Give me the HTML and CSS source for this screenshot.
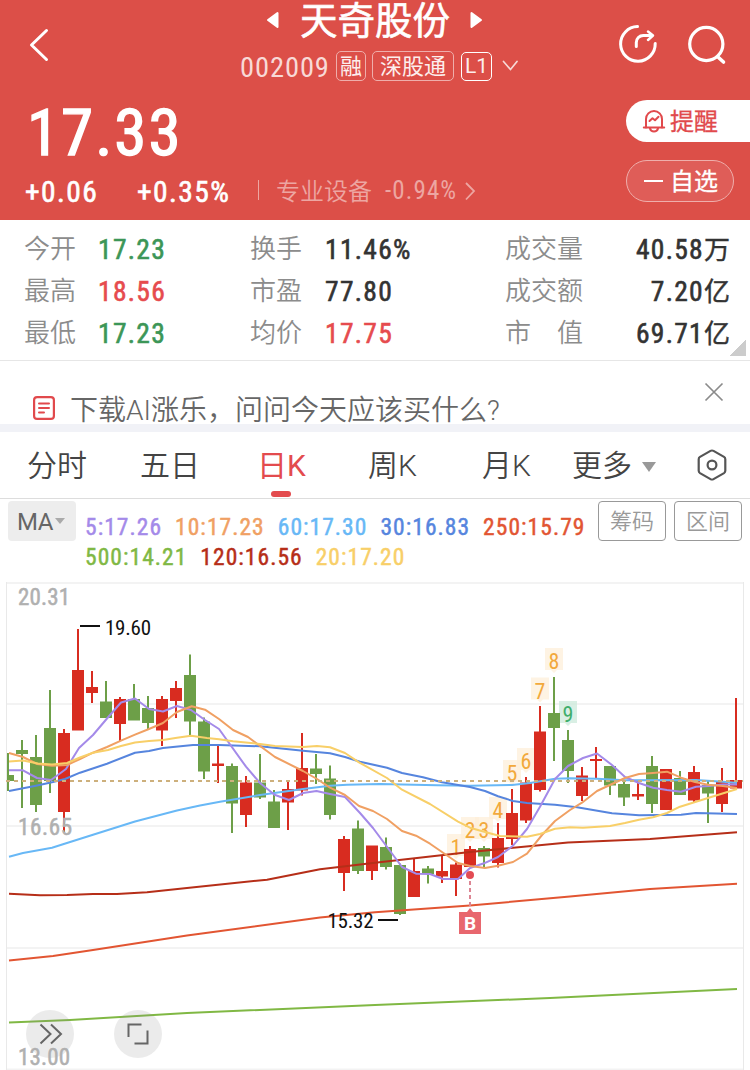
FILE: index.html
```html
<!DOCTYPE html>
<html lang="zh-CN">
<head>
<meta charset="utf-8">
<title>天奇股份 002009</title>
<link rel="stylesheet" href="styles.css">
</head>
<body>
<header class="header">
  <div class="topbar">
    <svg class="back" width="24" height="38" viewBox="0 0 24 38"><path d="M19.5 4.5 4.5 19l15 14.500" fill="none" stroke="#fff" stroke-width="3" stroke-linecap="round" stroke-linejoin="round"/></svg>
    <div class="heading">
      <div class="title-row">
        <svg width="14" height="20" viewBox="0 0 14 20"><path d="M11.500 3v14L2 10z" fill="#fff" stroke="#fff" stroke-width="2" stroke-linejoin="round"/></svg>
        <h1 class="title">天奇股份</h1>
        <svg width="14" height="20" viewBox="0 0 14 20"><path d="M2.500 3v14L12 10z" fill="#fff" stroke="#fff" stroke-width="2" stroke-linejoin="round"/></svg>
      </div>
      <div class="code-row">
        <span class="code">002009</span>
        <span class="tag tag-rong">融</span>
        <span class="tag tag-sz">深股通</span>
        <span class="tag tag-l1">L1</span>
        <svg class="code-arrow" width="18" height="14" viewBox="0 0 18 14"><path d="m2.500 2.500 7 8 6.500-8" fill="none" stroke="#f7d8d6" stroke-width="1.700" stroke-linecap="round"/></svg>
      </div>
    </div>
    <div class="actions">
      <svg width="42" height="42" viewBox="0 0 42 42" fill="none" stroke="#fff" stroke-width="3" stroke-linecap="round" stroke-linejoin="round"><path d="M20.500 3.600A17.300 17.300 0 1 0 38.200 20.500"/><path d="M19.300 23.500v-4a7 7 0 0 1 7-7h8"/><path d="M31 8.500l5 4-5 4.500" stroke-width="2.500"/></svg>
      <svg width="42" height="42" viewBox="0 0 42 42" fill="none" stroke="#fff" stroke-width="3.200" stroke-linecap="round"><circle cx="20.300" cy="21" r="16.600"/><path d="m32.500 34.500 5 4.500" stroke-width="3.600"/></svg>
    </div>
  </div>
  <div class="quote">
    <div class="quote-main">
      <div class="price">17.33</div>
      <div class="change-row">
        <span class="change">+0.06</span>
        <span class="change pct">+0.35%</span>
        <span class="divider"></span>
        <span class="sector">专业设备</span>
        <span class="sector-pct">-0.94%</span>
        <svg class="sector-arrow" width="14" height="22" viewBox="0 0 14 22"><path d="m3 3 8 8-8 8.500" fill="none" stroke="#eda6a2" stroke-width="1.800"/></svg>
      </div>
    </div>
    <div class="pills">
      <div class="pill pill-remind">
        <svg width="24" height="26" viewBox="0 0 24 26" fill="none" stroke="#e1494c" stroke-width="2" stroke-linecap="round" stroke-linejoin="round"><path d="M4 19.500V11a8 8 0 0 1 16 0v8.500"/><path d="M1.800 19.500h20.400M8 20.500c1 4 7 4 8 0M7.500 13l3-2.800 2.500 2 3.500-3.500"/></svg>
        <span>提醒</span>
      </div>
      <div class="pill pill-fav"><i class="minus"></i><span>自选</span></div>
    </div>
  </div>
</header>

<section class="stats">
  <span class="k">今开</span><span class="v green">17.23</span><span class="k">换手</span><span class="v">11.46%</span><span class="k">成交量</span><span class="v end">40.58<b>万</b></span>
  <span class="k">最高</span><span class="v red">18.56</span><span class="k">市盈</span><span class="v">77.80</span><span class="k">成交额</span><span class="v end">7.20<b>亿</b></span>
  <span class="k">最低</span><span class="v green">17.23</span><span class="k">均价</span><span class="v red">17.75</span><span class="k spread"><i>市</i><i>值</i></span><span class="v end">69.71<b>亿</b></span>
  <div class="corner"></div>
</section>

<section class="promo">
  <svg class="promo-icon" width="24" height="26" viewBox="0 0 24 26" fill="none" stroke="#e1494c" stroke-width="2.200" stroke-linecap="round"><rect x="2.100" y="2.100" width="19.800" height="21.800" rx="3"/><path d="M7 8.500h10M7 13h10M7 17.500h5" stroke-width="2"/></svg>
  <span class="promo-text">下载AI涨乐，问问今天应该买什么?</span>
  <svg class="close" width="22" height="22" viewBox="0 0 22 22"><path d="m2.500 2.500 17 17m0-17-17 17" stroke="#8b8b8b" stroke-width="1.700"/></svg>
</section>

<nav class="tabs">
  <span class="tab">分时</span>
  <span class="tab">五日</span>
  <span class="tab active">日K</span>
  <span class="tab">周K</span>
  <span class="tab">月K</span>
  <span class="tab">更多<i class="caret"></i></span>
  <svg width="32" height="34" viewBox="0 0 32 34" fill="none" stroke="#555" stroke-width="2.200" stroke-linejoin="round"><path d="M14.500 2.900q1.500-.8 3 0l10.500 6q1.300.8 1.300 2.300v11.600q0 1.500-1.300 2.300l-10.500 6q-1.500.8-3 0L4 25.100q-1.300-.8-1.300-2.300V11.200q0-1.500 1.300-2.300z"/><circle cx="16" cy="17" r="4.400"/></svg>
</nav>

<section class="legend">
  <div class="ma-btn">MA<i class="caret small"></i></div>
  <div class="ma-values">
    <div class="ma-line"><span class="c5">5:17.26</span><span class="c10">10:17.23</span><span class="c60">60:17.30</span><span class="c30">30:16.83</span><span class="c250">250:15.79</span></div>
    <div class="ma-line"><span class="c500">500:14.21</span><span class="c120">120:16.56</span><span class="c20">20:17.20</span></div>
  </div>
  <div class="box-btn">筹码</div>
  <div class="box-btn">区间</div>
</section>

<svg class="chart" id="chart" width="750" height="490" viewBox="0 580 750 490"></svg>
<script src="chart.js"></script>
</body>
</html>
```
FILE: styles.css
```css
* { box-sizing: border-box; }
body {
  margin: 0;
  width: 750px;
  height: 1070px;
  overflow: hidden;
  background: #fff;
  font-family: Roboto, "Noto Sans CJK SC", sans-serif;
  color: #333;
}
i { font-style: normal; }
svg { display: block; flex: none; }

.header { height: 220px; background: #dc4f48; color: #fff; }
.topbar { height: 90px; display: grid; grid-template-columns: 240px 1fr 133px; }
.back { margin: 26px 0 0 27px; }
.title-row { height: 40px; padding-left: 26px; display: flex; align-items: center; }
.title { margin: 1px 19px 0 20px; font-size: 37.5px; line-height: 40px; font-weight: 400; -webkit-text-stroke: 0.6px #fff; white-space: nowrap; }
.code-row { height: 52px; display: flex; align-items: center; }
.code { width: 96px; font-size: 28.5px; line-height: 30px; letter-spacing: 0.9px; font-stretch: 87%; color: #f8d9d7; font-weight: 400; padding-top: 3px; }
.tag { height: 30px; border: 1.5px solid #efaeab; border-radius: 5px; font-size: 22px; line-height: 30px; text-align: center; white-space: nowrap; color: #fdeeed; font-weight: 400; }
.tag-rong { width: 30px; }
.tag-sz { width: 82px; margin-left: 6px; }
.tag-l1 { width: 31px; height: 29px; margin-left: 7px; border-color: #fff; border-width: 1px; line-height: 27px; font-size: 21px; }
.code-arrow { margin-left: 9px; }
.actions { display: flex; gap: 27px; padding-top: 23px; }

.quote { height: 130px; display: flex; justify-content: space-between; }
.quote-main { padding-left: 25px; }
.price { height: 84px; padding-left: 2px; line-height: 87px; font-size: 65px; font-weight: 400; -webkit-text-stroke: 1.4px #fff; font-stretch: 87%; letter-spacing: 2px; }
.change-row { display: flex; align-items: center; height: 36px; white-space: nowrap; }
.change { width: 112px; font-size: 29.5px; font-weight: 400; -webkit-text-stroke: 0.6px #fff; font-stretch: 87%; letter-spacing: 1.4px; }
.pct { width: 121px; }
.divider { width: 1px; height: 20px; margin-top: -4px; background: #eda6a2; }
.sector { margin: -5px 0 0 17px; font-size: 24px; color: #eda6a2; width: 109px; font-weight: 350; }
.sector-pct { margin-top: -3px; font-size: 25px; font-stretch: 87%; letter-spacing: 1.1px; color: #eda6a2; width: 78px; }
.sector-arrow { margin-top: -3px; }
.pills { width: 124px; padding-top: 10px; }
.pill { height: 42px; display: flex; align-items: center; font-size: 24px; font-weight: 400; -webkit-text-stroke: 0.3px; }
.pill span { margin-top: -4px; }
.pill-remind { background: #fff; color: #e1494c; border-radius: 21px 0 0 21px; padding-left: 16px; gap: 4px; }
.pill-fav { width: 108px; margin-top: 18px; border: 1px solid #efaeab; border-radius: 21px; background: #df5d58; padding-left: 17px; gap: 7px; }
.minus { width: 19px; height: 2px; background: #fff; }

.stats {
  position: relative;
  height: 141px;
  padding: 8px 20px 0 24px;
  border-bottom: 1px solid #e6e6e6;
  display: grid;
  grid-template-columns: 74px 152px 75px 180px 100px 1fr;
  grid-auto-rows: 42px;
  align-items: center;
  line-height: 42px;
}
.k { font-size: 26px; color: #8c8c8c; font-weight: 350; white-space: nowrap; }
.v { font-size: 27.5px; font-weight: 400; -webkit-text-stroke: 0.6px; white-space: nowrap; font-stretch: 87%; letter-spacing: 1.3px; padding-top: 2px; }
.v b { font-size: 26px; font-weight: 400; -webkit-text-stroke: 0.4px; letter-spacing: 0; }
.end { text-align: right; }
.spread { display: flex; width: 78px; justify-content: space-between; }
.green { color: #3c9657; }
.red { color: #e64b4e; }
.corner { position: absolute; right: 4px; bottom: 4px; width: 16px; height: 16px; background: linear-gradient(135deg, transparent 50%, #ccc 50%); }

.promo { height: 71px; border-bottom: 8px solid #f1f2f7; display: flex; padding: 0 25px 0 32px; overflow: hidden; }
.promo-icon { margin-top: 34px; }
.promo-text { flex: 1; margin-left: 14px; padding-top: 30px; font-size: 28px; line-height: 40px; color: #666; white-space: nowrap; font-weight: 350; }
.close { margin-top: 20px; }

.tabs { height: 67px; border-bottom: 1px solid #ddd; display: grid; grid-template-columns: 113px 118px 110px 114px 90px 124px 32px; padding: 0 0 0 27px; align-items: center; font-size: 30px; color: #444; font-weight: 350; }
.tab { position: relative; line-height: 67px; height: 66px; white-space: nowrap; }
.active { color: #e34b4e; font-weight: 400; left: -1px; }
.active::after { content: ""; position: absolute; left: 14px; bottom: 1px; width: 20px; height: 6px; border-radius: 3px; background: #e34b4e; }
.caret { display: inline-block; border: 7.500px solid transparent; border-top: 10px solid #999; border-bottom: 0; margin-left: 10px; vertical-align: 4px; }
.small { border-width: 5px; border-top-width: 6px; margin-left: 2px; vertical-align: 6px; border-top-color: #aaa; }

.legend { height: 81px; display: flex; padding: 2px 8px 0; }
.ma-btn { width: 68px; height: 40px; border-radius: 4px; background: #ededed; color: #666; font-size: 24px; line-height: 43px; padding-left: 9px; letter-spacing: -0.5px; white-space: nowrap; }
.ma-values { width: 514px; margin-left: 8px; padding: 11px 0 0 1px; }
.ma-line { display: flex; gap: 13px; height: 30px; line-height: 30px; font-size: 23.500px; font-weight: 400; -webkit-text-stroke: 0.45px; font-stretch: 87%; letter-spacing: 1.05px; white-space: nowrap; }
.box-btn { width: 68px; height: 40px; border: 1.500px solid #999; border-radius: 4px; font-size: 22px; font-weight: 350; color: #999; line-height: 39px; text-align: center; }
.box-btn + .box-btn { margin-left: 8px; }
.c5 { color: #a48ae9; }
.c10 { color: #f0a063; }
.c60 { color: #68b8f6; }
.c30 { color: #5685de; }
.c250 { color: #e25532; }
.c500 { color: #80b844; }
.c120 { color: #b62e18; }
.c20 { color: #f8cf68; }

.chart { font-family: Roboto, sans-serif; font-stretch: 87%; }
.axis { fill: #b0b0b0; stroke: #b0b0b0; stroke-width: 0.5px; font-size: 23px; font-weight: 400; }
.extreme { fill: #111; font-size: 21px; }
.seq { font-size: 22px; text-anchor: middle; }
.flag { font-size: 19px; font-weight: 700; font-stretch: 100%; fill: #fff; text-anchor: middle; }
```
FILE: chart.js
```js
// Candles are 14px apart: [colour, body top, body bottom, wick top, wick bottom]
const candles = [
  'g 775 781 753 791', 'g 750 754 740 808', 'g 757 805 735 812', 'g 728 781 690 793', 'r 733 812 729 832',
  'r 670 730.500 629 730', 'r 687 693 671 703', 'g 701.500 718 681 718', 'r 699 724 697 741', 'g 699 720.500 684 720',
  'g 708 723 696 729', 'r 699 730.500 696 746', 'r 688 701 681 718', 'g 675 721.500 654.500 735', 'g 721.500 771.500 717.500 779',
  'r 763.500 766 746 783', 'g 766 803.500 763.500 833', 'r 782.500 815 776 827', 'g 782.500 797.500 754 799', 'g 801.500 828 790 828',
  'r 789 802.500 782 830', 'r 768 790.500 733 795.500', 'g 768.500 774 754 784', 'g 778.500 815 765.500 819.500', 'r 839 873 836 891',
  'g 828.500 871 820.500 874', 'r 845.500 871 845.500 880', 'g 847 867 837.500 869.500', 'g 865 914 863.500 915', 'r 871 897 858.500 897',
  'g 868.500 874 866 883.500', 'r 871 876.500 856 883', 'r 864.500 879 862.500 896', 'r 849 867 846 867', 'g 848 856.500 846 867',
  'r 838 863 823 867.500', 'r 813 839 789 845', 'r 782.500 820.500 777 823', 'r 731.500 790 706 791.500', 'g 713 728 677 761',
  'g 740 771 730 783', 'r 775.500 796 767 801', 'r 759 761 747 778', 'g 766 785.500 766 795', 'g 784 797.500 781 806',
  'r 794 796.500 781 800', 'g 766 804 756 813', 'r 769 810 769 810', 'g 778 795 771 795', 'r 772 800.500 766 802',
  'g 785 793.500 780 823', 'r 782 804 768 812', 'r 780 788.500 698 788'
];
const averages = [
  ['#80b844', '9,1022.500 70,1020 187,1013 375,1005 550,998 737,989'],
  ['#e25532', '9,960.500 53,956 93,950 187,935.500 320,917.500 375,912.300 470,905.500 570,896.500 650,889 737,883.700'],
  ['#b62e18', '9,893.700 40,895.300 67,895 93,894 117,894 147,892.300 187,888 267,879.700 320,869.300 375,862.700 470,852 568,842.500 650,839 737,832.300'],
  ['#68b8f6', '9,856.700 23,853 52,847.700 63,844.300 93,834.700 135,821.500 177,810.500 200,805.500 220,801.700 260,795 303,789 330,785.700 347,784.700 380,784 437,785.300 470,785.700 512,785 530,783 555,778.700 570,778.300 597,778.700 625,780.300 696,780 723,781.700 737,783'],
  ['#5685de', '9,791 36,785.700 53,782 65,779 80,772.700 107,763.700 135,752.700 149,751 163,748 193,745 219,745 260,746.300 303,750.700 330,753.300 345,757 360,761.700 387,767.700 402,773 423,777.300 442,782.300 470,787 485,791 498,796.300 513,801 527,803 555,804.700 577,807.300 612,813.300 639,815.300 681,814.700 696,813 737,814'],
  ['#a48ae9', '9,770.300 23,770.300 37,778 51,780 66,769 79,748 93,735 107,718.500 121,702.500 135,698.500 149,709 163,711.500 177,706 191,710 205,720 219,729 246,766.700 260,783 274.500,794.700 289,800 303,793 316.500,791 330,794 345,797 360,813 373,828 402,867 416,873.700 430,874 443,879 458,879 470,868 484,863.300 498,857 513,845.700 527,829 540,806.700 555,779 568,766 583,758 597,753.500 612,765 625,777 639,783 653,787.700 667,790 681,791.700 696,786.700 709,786 723,784.500 737,784.500'],
  ['#f0a063', '9,753 23,757 37,764 52,765.700 67,765 80,759 93,752.700 107,747 121,740.700 135,734.700 149,729 163,723 177,712 191.700,706.300 205,709.700 219,719 233,730 248,737 275,757 303,771 317,779 330,787.700 345,795 359,806 373,811 387,819 402,831 416,835.700 430,843.700 458,863 470,866 485,868 498,865.700 513,862 527,853.700 542,835 555,821 570,810 582,802.700 597,791 612,784 625,778 639,774 653,773 667,771.700 681,777.700 695,782 708,784.700 723,786 737,788'],
  ['#f8cf68', '9,761.500 23,760.500 38,763.500 52,764.500 67,763 80,757.500 93,752.700 108,750 121,746 135,742.500 149,741 163,740 177,737.700 191,735.700 207,738 219,739.300 233,741.300 260,744 275,746 303,747 317,746 330,747.300 345,753 359,762.300 387,778 402,789.700 430,804 458,821.700 470,827.700 485,832 500,836 527,836.700 540,834 555,828.700 570,827.300 583,827.700 610,826 625,823 639,819.700 653,817.300 667,813 680,806.700 696,801.700 708,798 737,789']
];
// Sequence counters above the candles: [digit, candle index, top of the tag]
const counters = [[1, 32, 834], [2, 33, 817], [3, 34, 817], [4, 35, 797], [5, 36, 760], [6, 37, 748], [7, 38, 677.5], [8, 39, 648], [9, 40, 701]];

let s = '';
for (const y of [583, 704, 826, 948, 1069.5]) s += `<path d="M6 ${y}H744" stroke="#f3f3f3" stroke-width="2"/>`;
s += '<path d="M6.500 582V1070M743.500 582V1070" stroke="#e9e9e9"/>';
for (const [n, i, y] of counters) {
  const x = 8 + i * 14, g = n === 9;
  s += `<path d="M${x - 9} ${y}h18v22h-6l-3 3-3-3h-6z" fill="${g ? '#cceadb' : '#feefd9'}" fill-opacity=".75"/>`;
  s += `<text class="seq" x="${x}" y="${y + 21}" fill="${g ? '#3fae6b' : '#f2a93c'}">${n}</text>`;
}
s += '<clipPath id="plot"><path d="M7 582H743V1070H7z"/></clipPath><g clip-path="url(#plot)">';
candles.forEach((c, i) => {
  const [k, top, bottom, high, low] = c.split(' ');
  const x = 8 + i * 14;
  s += `<path fill="${k === 'r' ? '#d82c20' : '#6d9f48'}" d="M${x - 6} ${top}h12V${bottom}h-12zM${x - 1} ${high}h2V${low}h-2z"/>`;
});
s += '</g>';
for (const [color, points] of averages) {
  s += `<polyline points="${points}" fill="none" stroke="${color}" stroke-width="2" stroke-linejoin="round"/>`;
}
s += '<path d="M6 781H743" stroke="#cdb07c" stroke-width="2" stroke-dasharray="4 4"/>';
s += '<circle cx="470" cy="875" r="4" fill="#e34b53"/><path d="M470 881V908" stroke="#dc8593" stroke-width="2" stroke-dasharray="4 3"/>';
s += '<path d="M459 912h8l3-4 3 4h8v22h-22z" fill="#e8676e"/><text class="flag" x="470" y="930">B</text>';
s += '<path d="M80 626H100M378 920H398" stroke="#111" stroke-width="2"/>';
s += '<text class="extreme" x="105" y="634.500" textLength="46">19.60</text><text class="extreme" x="327.500" y="928" textLength="46">15.32</text>';
s += '<g fill="#888" fill-opacity=".17"><circle cx="50" cy="1034" r="24"/><circle cx="138" cy="1034" r="24"/></g>';
s += '<path d="M40.500 1024.500 50.500 1034 40.500 1043.500M51 1024.500 61 1034 51 1043.500M128.500 1037V1024.500H141.500M147.500 1030.500V1043.500H134.500" fill="none" stroke="#666" stroke-width="2"/>';
s += '<text class="axis" x="18" y="605" textLength="52">20.31</text><text class="axis" x="18" y="835" textLength="54">16.65</text><text class="axis" x="18" y="1065" textLength="52">13.00</text>';
document.getElementById('chart').innerHTML = s;
```
